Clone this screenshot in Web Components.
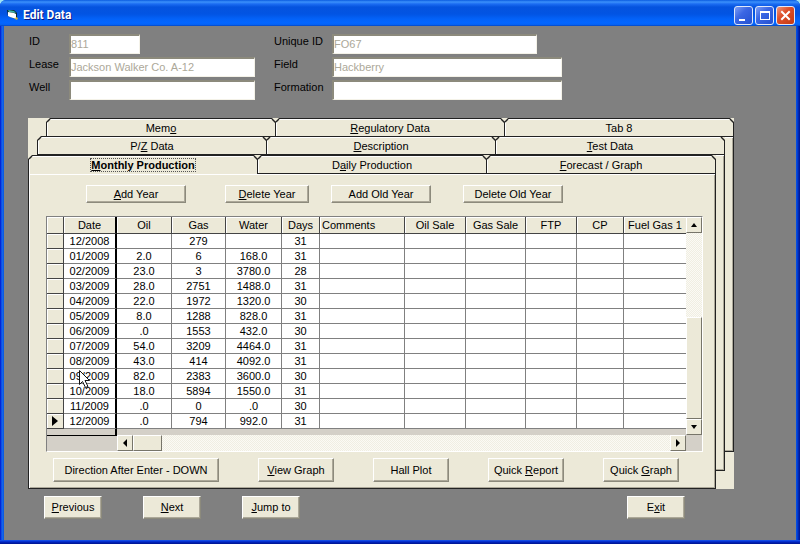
<!DOCTYPE html>
<html lang="en">
<head>
<meta charset="utf-8">
<title>Edit Data</title>
<style>
    body {
        background-color: #9fe3f5;
        font-family: "Liberation Sans", Arial, sans-serif;
        font-size: 11px;
        margin: 0;
    }

    .fields {
        display: grid;
        gap: 3px 0;
        grid-template-columns: 245px 1fr;
        padding: 8px 0 0 25px;
    }

    .fields form-field:nth-child(odd) {
        --label-width: 40px;
    }

    .fields form-field:nth-child(even) {
        --label-width: 58px;
    }

    .w-s { --field-width: 71px; }
    .w-m { --field-width: 186px; }
    .w-l { --field-width: 205px; }
    .w-xl { --field-width: 230px; }

    /* the three rows of tabs share one cell, each a step further forward */
    .stack {
        background-color: #ece9d8;
        display: grid;
        margin: 18px 62px 0 24px;
    }

    .stack tab-layer {
        grid-area: 1 / 1;
    }

    .back { margin: 0 0 37px 18px; }
    .middle { margin: 18px 9px 18px 9px; }
    .front { margin: 37px 18px 0 0; }

    .toolbar {
        display: grid;
        grid-template-columns: 139px 106px 132px 100px;
        padding: 0 0 13px 40px;
    }

    .toolbar win-button {
        --button-height: 18px;
        --button-width: 100px;
    }

    .toolbar .short {
        --button-width: 84px;
    }

    .reports {
        display: flex;
        gap: 39px;
        padding: 6px 0 5px 7px;
    }

    .reports win-button {
        --button-height: 24px;
        --button-width: 76px;
    }

    .reports .wide {
        --button-width: 166px;
    }

    .actions {
        display: flex;
        gap: 41px;
        padding: 7px 111px 21px 40px;
    }

    .actions win-button {
        --button-height: 23px;
        --button-width: 58px;
    }

    .actions .exit {
        margin-left: auto;
    }
</style>
</head>
<body>

<app-window caption="Edit Data">
    <div class="fields">
        <form-field class="w-s" label="ID" value="811"></form-field>
        <form-field class="w-l" label="Unique ID" value="FO67"></form-field>
        <form-field class="w-m" label="Lease" value="Jackson Walker Co. A-12"></form-field>
        <form-field class="w-xl" label="Field" value="Hackberry"></form-field>
        <form-field class="w-m" label="Well"></form-field>
        <form-field class="w-xl" label="Formation"></form-field>
    </div>

    <div class="stack">
        <tab-layer class="back" tabs="Mem_o|_Regulatory Data|Tab 8"></tab-layer>
        <tab-layer class="middle" tabs="P/_Z Data|_Description|_Test Data"></tab-layer>
        <tab-layer class="front" tabs="_Monthly Production|D_aily Production|_Forecast / Graph" selected="0">
            <div class="toolbar">
                <win-button><u>A</u>dd Year</win-button>
                <win-button class="short"><u>D</u>elete Year</win-button>
                <win-button>Add Old Year</win-button>
                <win-button>Delete Old Year</win-button>
            </div>
            <data-grid></data-grid>
            <div class="reports">
                <win-button class="wide">Direction After Enter - DOWN</win-button>
                <win-button><u>V</u>iew Graph</win-button>
                <win-button>Hall Plot</win-button>
                <win-button>Quick <u>R</u>eport</win-button>
                <win-button>Quick <u>G</u>raph</win-button>
            </div>
        </tab-layer>
    </div>

    <div class="actions">
        <win-button><u>P</u>revious</win-button>
        <win-button><u>N</u>ext</win-button>
        <win-button><u>J</u>ump to</win-button>
        <win-button class="exit">E<u>x</u>it</win-button>
    </div>
</app-window>

<script>
class AppWindow extends HTMLElement {

    constructor() {
        super()
        this.shadow = this.attachShadow({ mode: 'open' })
    }

    connectedCallback() {
        this.render()
    }

    render() {
        this.shadow.innerHTML =
            /*html*/
            `
            <style>
                :host {
                    background: linear-gradient(90deg, #0019cf 0, #0831d9 1px, #166aee 2px, #0855dd 4px, #0855dd calc(100% - 4px), #0144e0 calc(100% - 3px), #001ea0 calc(100% - 1px), #00138c 100%);
                    border-radius: 6px 6px 0 0;
                    box-sizing: border-box;
                    display: flex;
                    flex-direction: column;
                    min-height: 100vh;
                    overflow: hidden;
                }

                header {
                    align-items: center;
                    background: linear-gradient(#0a5be0 0, #3c91fb 2px, #1b6cf2 4px, #0553de 7px, #0254e3 14px, #0362f8 19px, #0366ff 23px, #0560f0 25px, #0440b4 26px);
                    box-sizing: border-box;
                    display: flex;
                    height: 26px;
                    padding: 4px 5px 0 7px;
                }

                h1 {
                    color: #fff;
                    flex: 1;
                    font: bold 12px/20px Roboto, "Open Sans", sans-serif;
                    margin: 0 0 0 4px;
                    text-shadow: 1px 1px #0a1883;
                }

                .controls {
                    display: flex;
                    gap: 2px;
                }

                .controls button {
                    background: linear-gradient(135deg, #7d9ef5, #3b67e4 40%, #2450d0);
                    border: 1px solid #dfe8fb;
                    border-radius: 3px;
                    box-sizing: border-box;
                    height: 19px;
                    padding: 0;
                    width: 19px;
                }

                .controls button.close {
                    background: linear-gradient(135deg, #f0977c, #dd4f2a 40%, #c33a12);
                }

                svg {
                    display: block;
                }

                main {
                    background-color: #808080;
                    flex: 1;
                    margin: 0 4px;
                }

                footer {
                    background: linear-gradient(#1c5be8, #0a3ce0 1px, #0024c0 2px, #00138c);
                    height: 4px;
                }
            </style>

            <header>
                <svg width="12" height="12" viewBox="0 0 12 12">
                    <path d="M0 1l7 0 3 3v6l-2 0-7-3z" fill="#0b2a33"/>
                    <path d="M1 1l6 1 2 2-7-1z" fill="#3fb8a8"/>
                    <path d="M1 3l6 1 2 1v5l-6-2-2-1z" fill="#fff"/>
                    <path d="M9 8l2 1-1 2-2-1z" fill="#d8b23c"/>
                </svg>
                <h1>${this.getAttribute('caption')}</h1>
                <div class="controls">
                    <button aria-label="Minimize"><svg width="17" height="17"><path d="M4 12h6v2H4z" fill="#fff"/></svg></button>
                    <button aria-label="Maximize"><svg width="17" height="17"><path d="M4 4h10v9H4zM5 6v6h8V6z" fill="#fff" fill-rule="evenodd"/></svg></button>
                    <button class="close" aria-label="Close"><svg width="17" height="17"><path d="M5 5l7 7M12 5l-7 7" stroke="#fff" stroke-width="2" stroke-linecap="square"/></svg></button>
                </div>
            </header>
            <main><slot></slot></main>
            <footer></footer>
            `
    }
}

class FormField extends HTMLElement {

    constructor() {
        super()
        this.shadow = this.attachShadow({ mode: 'open' })
    }

    connectedCallback() {
        this.render()
    }

    render() {
        this.shadow.innerHTML =
            /*html*/
            `
            <style>
                :host {
                    align-items: flex-start;
                    display: flex;
                }

                label {
                    color: #000;
                    line-height: 15px;
                    width: var(--label-width);
                }

                input {
                    background-color: #fff;
                    border: 2px solid;
                    border-color: #8c8a7c #f4f2e8 #f4f2e8 #8c8a7c;
                    border-right-width: 1px;
                    border-bottom-width: 1px;
                    box-sizing: border-box;
                    color: #aca899;
                    font: inherit;
                    height: 20px;
                    padding: 0 0 2px;
                    width: var(--field-width);
                }
            </style>

            <label for="field">${this.getAttribute('label')}</label>
            <input id="field" type="text" value="${this.getAttribute('value') || ''}" disabled>
            `
    }
}

class WinButton extends HTMLElement {

    constructor() {
        super()
        this.shadow = this.attachShadow({ mode: 'open' })
    }

    connectedCallback() {
        this.render()
    }

    render() {
        this.shadow.innerHTML =
            /*html*/
            `
            <style>
                :host {
                    display: block;
                }

                button {
                    background-color: #ece9d8;
                    border: 1px solid;
                    border-color: #fff #8c8a7c #8c8a7c #fff;
                    box-shadow: inset -1px -1px #aca899;
                    box-sizing: border-box;
                    color: #000;
                    display: block;
                    font: inherit;
                    height: var(--button-height);
                    padding: 0 0 1px;
                    white-space: nowrap;
                    width: var(--button-width);
                }
            </style>

            <button type="button"><slot></slot></button>
            `
    }
}

class TabLayer extends HTMLElement {

    constructor() {
        super()
        this.shadow = this.attachShadow({ mode: 'open' })
    }

    connectedCallback() {
        this.render()
    }

    // the letter after an underscore is the access key
    tab(text, index) {
        const selected = this.getAttribute('selected') === String(index)
        const label = text.replace(/_(.)/, '<u>$1</u>')

        return `<button role="tab" aria-selected="${selected}"><span>${label}</span></button>`
    }

    render() {
        this.shadow.innerHTML =
            /*html*/
            `
            <style>
                :host {
                    background-color: #ece9d8;
                    display: flex;
                    flex-direction: column;
                }

                nav {
                    display: flex;
                }

                button {
                    background: #222;
                    border: 0;
                    clip-path: polygon(0 4px, 4px 0, calc(100% - 4px) 0, 100% 4px, 100% 100%, 0 100%);
                    color: #000;
                    flex: 1;
                    font: inherit;
                    height: 19px;
                    padding: 1px 0 0;
                    position: relative;
                    z-index: 0;
                }

                button + button {
                    margin-left: -1px;
                }

                button::before {
                    background-color: #ece9d8;
                    box-shadow: inset 1px 1px #fff;
                    clip-path: polygon(0 4px, 4px 0, calc(100% - 4px) 0, 100% 4px, 100% 100%, 0 100%);
                    content: '';
                    inset: 1px;
                    position: absolute;
                    z-index: -1;
                }

                button[aria-selected="true"] {
                    font-weight: bold;
                }

                button[aria-selected="true"]::before {
                    bottom: 0;
                }

                button[aria-selected="true"] span {
                    outline: 1px dotted #555;
                }

                section {
                    border: 1px solid #222;
                    border-top: 0;
                    box-shadow: inset 1px 1px #fff, inset -1px -1px #aca899;
                    flex: 1;
                    padding: 11px 12px 1px 17px;
                }
            </style>

            <nav role="tablist">${this.getAttribute('tabs').split('|').map((text, i) => this.tab(text, i)).join('')}</nav>
            <section><slot></slot></section>
            `
    }
}

const COLUMNS = [
    ['', 17], ['Date', 53], ['Oil', 55], ['Gas', 54], ['Water', 56], ['Days', 38],
    ['Comments', 85], ['Oil Sale', 61], ['Gas Sale', 60], ['FTP', 51], ['CP', 47], ['Fuel Gas 1', 0]
]

const ROWS = [
    ['12/2008', '', '279', '', '31'],
    ['01/2009', '2.0', '6', '168.0', '31'],
    ['02/2009', '23.0', '3', '3780.0', '28'],
    ['03/2009', '28.0', '2751', '1488.0', '31'],
    ['04/2009', '22.0', '1972', '1320.0', '30'],
    ['05/2009', '8.0', '1288', '828.0', '31'],
    ['06/2009', '.0', '1553', '432.0', '30'],
    ['07/2009', '54.0', '3209', '4464.0', '31'],
    ['08/2009', '43.0', '414', '4092.0', '31'],
    ['09/2009', '82.0', '2383', '3600.0', '30'],
    ['10/2009', '18.0', '5894', '1550.0', '31'],
    ['11/2009', '.0', '0', '.0', '30'],
    ['12/2009', '.0', '794', '992.0', '31']
]

const POINTER = `<svg class="pointer" width="13" height="21"><path d="M1.500 1.500v14l3-3 3 6 2.500-1-3-6h4.500z" fill="#fff" stroke="#111"/></svg>`
const MARKER = `<svg width="6" height="10"><path d="M0 0l6 5-6 5z"/></svg>`

class DataGrid extends HTMLElement {

    constructor() {
        super()
        this.shadow = this.attachShadow({ mode: 'open' })
    }

    connectedCallback() {
        this.render()
    }

    row(values, index) {
        const cells = COLUMNS.slice(1).map((column, i) => {
            const pointer = index === 9 && i === 0 ? POINTER : ''
            return `<td>${values[i] || ''}${pointer}</td>`
        })

        return `<tr><th scope="row">${index === ROWS.length - 1 ? MARKER : ''}</th>${cells.join('')}</tr>`
    }

    render() {
        this.shadow.innerHTML =
            /*html*/
            `
            <style>
                :host {
                    background-color: #d4d0c8;
                    border: 1px solid;
                    border-color: #808080 #fff #fff #808080;
                    display: grid;
                    grid-template-columns: 1fr 16px;
                    grid-template-rows: auto 16px;
                }

                table {
                    background-color: #fff;
                    border-collapse: separate;
                    border-spacing: 0;
                    table-layout: fixed;
                    width: 100%;
                }

                th, td {
                    border-bottom: 1px solid #808080;
                    border-right: 1px solid #808080;
                    box-sizing: border-box;
                    font-weight: normal;
                    height: 15px;
                    line-height: 14px;
                    overflow: visible;
                    padding: 0;
                    text-align: center;
                    white-space: nowrap;
                }

                th {
                    background-color: #ece9d8;
                    border-color: #444;
                    box-shadow: inset 1px 1px #fff;
                }

                thead th {
                    height: 17px;
                    line-height: 16px;
                }

                thead th:nth-child(7) {
                    padding-left: 2px;
                    text-align: left;
                }

                th:nth-child(2), td:nth-child(2) {
                    border-right: 2px solid #000;
                }

                td:nth-child(2) {
                    position: relative;
                }

                tr > :last-child {
                    border-right: 0;
                }

                th svg {
                    display: block;
                    margin: 0 auto;
                }

                .pointer {
                    left: 14px;
                    position: absolute;
                    top: 0;
                    z-index: 1;
                }

                .below {
                    border-right: 2px solid #000;
                    box-sizing: border-box;
                    height: 6px;
                    width: 70px;
                }

                .bottom {
                    display: flex;
                }

                .split {
                    border-top: 1px solid #000;
                    box-sizing: border-box;
                    width: 70px;
                }

                .bar {
                    background: repeating-conic-gradient(#fbfaf5 0 25%, #f0eee2 0 50%) 0 0 / 2px 2px;
                    display: flex;
                    flex: 1;
                }

                .bar.vertical {
                    flex-direction: column;
                }

                .bar button, .thumb {
                    align-items: center;
                    background-color: #ece9d8;
                    border: 1px solid;
                    border-color: #fff #77756a #77756a #fff;
                    box-sizing: border-box;
                    display: flex;
                    flex: none;
                    height: 16px;
                    justify-content: center;
                    padding: 0;
                    width: 16px;
                }

                .vertical .thumb {
                    height: 102px;
                    margin-top: auto;
                }

                .horizontal .thumb {
                    margin-right: auto;
                    width: 29px;
                }
            </style>

            <div class="pane">
                <table>
                    <colgroup>${COLUMNS.map(([, width]) => `<col${width ? ` style="width: ${width}px"` : ''}>`).join('')}</colgroup>
                    <thead><tr>${COLUMNS.map(([name]) => `<th scope="col">${name}</th>`).join('')}</tr></thead>
                    <tbody>${ROWS.map((values, i) => this.row(values, i)).join('')}</tbody>
                </table>
                <div class="below"></div>
            </div>
            <div class="bar vertical">
                <button aria-label="Scroll up"><svg width="6" height="4"><path d="M3 0l3 4H0z"/></svg></button>
                <div class="thumb"></div>
                <button aria-label="Scroll down"><svg width="6" height="4"><path d="M0 0h6L3 4z"/></svg></button>
            </div>
            <div class="bottom">
                <div class="split"></div>
                <div class="bar horizontal">
                    <button aria-label="Scroll left"><svg width="4" height="8"><path d="M4 0v8L0 4z"/></svg></button>
                    <div class="thumb"></div>
                    <button aria-label="Scroll right"><svg width="4" height="8"><path d="M0 0l4 4-4 4z"/></svg></button>
                </div>
            </div>
            `
    }
}

customElements.define('app-window', AppWindow)
customElements.define('form-field', FormField)
customElements.define('win-button', WinButton)
customElements.define('tab-layer', TabLayer)
customElements.define('data-grid', DataGrid)
</script>
</body>
</html>
